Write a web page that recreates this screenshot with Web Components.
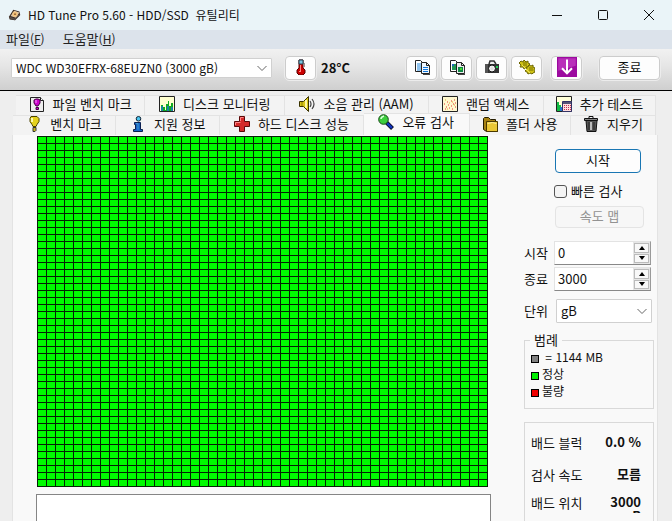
<!DOCTYPE html>
<html lang="ko">
<head>
<meta charset="utf-8">
<title>HD Tune Pro 5.60 - HDD/SSD 유틸리티</title>
<style>
html,body{margin:0;height:100%;overflow:hidden}
body{background:#eee;font:13px/16px "Noto Sans CJK KR","Noto Sans",sans-serif;color:#111}
</style>
</head>
<body>
<tune-app></tune-app>
<script>
const define=(name,html,setup)=>customElements.define(name,class extends HTMLElement{
  constructor(){
    super();
    const t=document.createElement('template');
    t.innerHTML='<style>*{box-sizing:border-box}:host{box-sizing:border-box}button,input,select{font:inherit;color:inherit;margin:0}</style>'+html;
    this.attachShadow({mode:'open'}).append(t.content.cloneNode(true));
  }
  connectedCallback(){ if(setup) setup(this,this.shadowRoot); }
});

const icons={
disk:'<path d="M1 10L6 2l7 2 1 4-6 6-6-1z" fill="#3b2a20"/><path d="M3 9l4-6 6 2-4 6z" fill="#d9c9b4"/><circle cx="8" cy="7" r="3" fill="#f2c27a"/><circle cx="8" cy="7" r="1" fill="#8a5a30"/><path d="M2 10l6 2 5-5v2l-5 5-6-2z" fill="#57504c"/>',
thermo:'<path d="M6 1h4v8l2 2v3l-2 2H6l-2-2v-3l2-2z" fill="#c00" stroke="#500"/><path d="M6 1h4v4H6z" fill="#7cc6e0" stroke="#245"/><path d="M7 6v6H6v1h2V6z" fill="#f88"/><path d="M11 7h1M11 5h1" stroke="#333"/>',
copy:'<path d="M1.500 1.500h5l2 2v9h-7z" fill="#fff" stroke="#222"/><path d="M3 5h4M3 7h4M3 9h4M3 11h4" stroke="#28d"/><path d="M7.500 3.500h5l3 3v8h-8z" fill="#eef7ff" stroke="#222"/><path d="M12.500 3.500v3h3" fill="none" stroke="#222"/><path d="M9 8.500h5M9 10.500h5M9 12.500h5" stroke="#17d"/><path d="M9 15.500h7V8" fill="none" stroke="#444"/>',
copyimg:'<path d="M1.500 1.500h5l2 2v9h-7z" fill="#fff" stroke="#222"/><path d="M3 5h4v6H3z" fill="#295"/><path d="M3 5h2v2H3z" fill="#26b"/><path d="M7.500 3.500h5l3 3v8h-8z" fill="#eee" stroke="#222"/><path d="M12.500 3.500v3h3" fill="none" stroke="#222"/><path d="M9 8h5v5H9z" fill="#184"/><path d="M11 9h2v2h-2z" fill="#4d3"/><path d="M9 15.500h7V8" fill="none" stroke="#444"/>',
camera:'<path d="M5 5l1-3h4l2 3" fill="#eee" stroke="#333" stroke-width="1.500"/><path d="M1 5h14v9H1z" fill="#333"/><path d="M1 5h3v9H1z" fill="#555"/><circle cx="8" cy="9.500" r="3.500" fill="#eee" stroke="#111"/><circle cx="8" cy="9.500" r="1.500" fill="#ddd"/><path d="M12 7h2v2h-2z" fill="#2c5"/>',
gears:'<g stroke="#6b6400" stroke-linejoin="round"><path d="M2 2l2 1 1-2 2 2 2-1v2l2 1-2 2v2l-2 0-2 1-1-2-3 0 1-2-2-2z" fill="#cfc214"/><path d="M7 8l2 0 1-2 2 1 2-1v2l2 1-1 2 1 2-2 1-1 1-2-1-2 1-1-2-2-1 2-2z" fill="#cfc214"/></g><path d="M5 3v4M7 3v4M11 8v4M13 8v4" stroke="#776f00"/><path d="M3 6l8 8" stroke="#eee35b"/>',
down:'<path d="M0 0h16v16H0z" fill="#9c0a9f"/><path d="M1 1h14v6L1 11z" fill="#b92fba"/><path d="M8 2v11M4 9l4 4 4-4" fill="none" stroke="#fff" stroke-width="1.600"/>',
filebench:'<path d="M1.500 1.500h10l3 3v11h-13z" fill="#eee" stroke="#222"/><path d="M11.500 1.500v3h3" fill="#fff" stroke="#222"/><path d="M5 4l2-1h2l2 1v3l-2 3H7L5 7z" fill="#c0c" stroke="#404"/><path d="M7 11.500h2.500v2H7z" fill="#c0c" stroke="#404"/><path d="M7 4v3" stroke="#f9f"/>',
monitor:'<path d="M.5.5h15v15H.5z" fill="#ffffcf" stroke="#222"/><path d="M2 15V9h2v2h2v3h1V8h2V5h1v5h2V7h2v8z" fill="#1a2"/><path d="M3 10v5M9 10v5M13 11v4" stroke="#27c" stroke-width="1.500"/>',
sound:'<path d="M.5 5.500h4l5-5v15l-5-5h-4z" fill="#d8c619" stroke="#3a3300"/><path d="M7 4v8" stroke="#fff8a0" stroke-width="2"/><path d="M3 6v4" stroke="#8b7c00"/><path d="M11 5q2 3 0 6M13 3q4 5 0 10" fill="none" stroke="#444" stroke-width="1.200"/>',
random:'<path d="M.5.5h15v15H.5z" fill="#fff8cf" stroke="#222"/><path d="M2 8h1M4 11h1M3 13h1M6 9h1M7 12h1M5 6h1M9 10h1M11 8h1M13 11h1M9 5h1M12 4h1M13 7h1M10 13h1" stroke="#d33"/><path d="M3 4h1M7 7h1M10 6h1M12 9h1M5 13h1" stroke="#da3"/>',
extra:'<path d="M.5.5h15v15H.5z" fill="#ffffd8" stroke="#222"/><path d="M1 6h2v3h2v6H1z" fill="#1b4"/><path d="M4 11h2v4H4z" fill="#27c"/><path d="M6.500 5.500h9v10h-9z" fill="#fdd" stroke="#336"/><path d="M7 6h8v2H7z" fill="#557"/><path d="M8 9.500h7M8 11.500h7M8 13.500h7" stroke="#b35" stroke-dasharray="1 1"/>',
bulb:'<path d="M5 .5h6l2 2v3l-2 3-1 2H7l-1-2-2-3v-3z" fill="#e5d21d" stroke="#4a4300"/><path d="M6 2v4" stroke="#fff9b0" stroke-width="2"/><path d="M7 11.500h3v3l-1 1H7z" fill="#cbb81c" stroke="#333"/>',
info:'<circle cx="8.500" cy="2.800" r="2.300" fill="#4ac4ef" stroke="#123"/><path d="M4.500 6.500h6v7h2v2h-9v-2h2v-5h-1z" fill="#1563c4" stroke="#0b1f50"/><path d="M6 7.500h2v6" fill="none" stroke="#49c"/>',
cross:'<path d="M5.500.5h5v5h5v5h-5v5h-5v-5h-5v-5h5z" fill="#d42a2a" stroke="#5a0808"/><path d="M6.500 5V1.500h3M1.500 9V6.500h5" fill="none" stroke="#f88"/>',
lens:'<path d="M8.500 8.500l6 6" stroke="#001" stroke-width="4"/><path d="M9 9l5 5" stroke="#13b" stroke-width="2.500"/><circle cx="5.500" cy="5.500" r="4.800" fill="#3ccd3c" stroke="#174a17"/><path d="M3 5q0-2 3-3" fill="none" stroke="#d8ffd8" stroke-width="1.500"/>',
folder:'<path d="M1.500 2.500l1-1h4l2 2h5v3l2 0v9h-11l-3-2z" fill="#a78112" stroke="#241c00"/><path d="M4.500 5.500h11v10h-11z" fill="#eac735" stroke="#4a3900"/><path d="M5.500 7.500q5-2 9 0" fill="none" stroke="#fff0a0"/>',
trash:'<path d="M3 4.500h11l-1 11H4z" fill="#555" stroke="#111"/><path d="M1.500 2.500h13v2h-13z" fill="#888" stroke="#111"/><path d="M6 2V.5h4V2" fill="none" stroke="#111"/><path d="M6 6v8M11 6v8" stroke="#222"/><path d="M8 6v8" stroke="#bbb" stroke-width="2"/>'
};
define('tune-icon','<style>:host{display:block;width:16px;height:16px;flex:none}svg{display:block;width:100%;height:100%}</style><svg viewBox="0 0 16 16" aria-hidden="true"></svg>',
  (el,r)=>{r.querySelector('svg').innerHTML=icons[el.getAttribute('name')]});

define('title-bar',`<style>
:host{display:flex;align-items:center;height:30px;padding-left:8px;background:#eaf4f8;font-size:12px}
tune-icon{width:14px;height:14px;margin-right:6px}
span{flex:1;white-space:pre}
button{width:46px;height:30px;border:0;background:none;padding:0;display:grid;place-items:center}
svg{width:12px;height:12px;fill:none;stroke:#111}
</style><tune-icon name="disk"></tune-icon><span><slot></slot></span>
<button aria-label="최소화"><svg><path d="M1 6.500h10"/></svg></button>
<button aria-label="최대화"><svg><rect x="1.500" y="1.500" width="9" height="9" rx="1"/></svg></button>
<button aria-label="닫기"><svg><path d="M1 1l10 10M11 1L1 11"/></svg></button>`);

define('menu-bar',`<style>
:host{display:flex;gap:18px;height:19px;padding:0 6px;background:#dce3eb;align-items:flex-start}
button{border:0;background:none;padding:0;color:#222;line-height:18px}small{font-size:12px}
</style><button>파일<small>(<u>F</u>)</small></button><button>도움말<small>(<u>H</u>)</small></button>`);

define('tool-button',`<style>
:host{display:block;width:31px;height:24px;flex:none;font-size:13px}
:host([wide]){width:61px}
button{width:100%;height:100%;border:1px solid #ccc;border-radius:4px;background:#fdfdfd;padding:0 0 1px;line-height:18px;display:grid;place-items:center;outline:1px solid #ececec}
</style><button><slot></slot></button>`,
(el,r)=>{const l=el.getAttribute('label'); if(l) r.querySelector('button').setAttribute('aria-label',l)});

define('drop-down',`<style>
:host{display:block;position:relative}
select{appearance:none;width:100%;height:100%;border:1px solid #d0d0d0;border-radius:1px;background:#fff;padding:0 20px 0 4px;line-height:18px}
svg{position:absolute;right:5px;top:calc(50% - 3px);width:10px;height:7px;fill:none;stroke:#666;pointer-events:none}
</style><select></select><svg><path d="M.5 1l4.500 4.500L9.500 1"/></svg>`,
(el,r)=>{const s=r.querySelector('select');s.add(new Option(el.getAttribute('value')));s.setAttribute('aria-label',el.getAttribute('label'))});

define('tool-bar',`<style>
:host{display:flex;align-items:center;height:42px;padding:0 12px 4px 11px;border-bottom:1px solid #000;background:linear-gradient(#f1f1f1,#e6e6e6 40%,#cfcfcf)}
drop-down{flex:0 1 261px;height:20px;margin-right:13px;font-size:12px}
.temp{flex:1;padding-left:5px;font-weight:700}
.group{display:flex;gap:4px;margin-right:9px}
.end{display:flex;gap:17px}
tune-icon[name=down]{width:20px;height:20px}
</style><drop-down label="드라이브" value="WDC WD30EFRX-68EUZN0 (3000 gB)"></drop-down>
<tool-button label="온도"><tune-icon name="thermo"></tune-icon></tool-button><span class="temp">28°C</span>
<div class="group"><tool-button label="텍스트 복사"><tune-icon name="copy"></tune-icon></tool-button>
<tool-button label="그림 복사"><tune-icon name="copyimg"></tune-icon></tool-button>
<tool-button label="스크린샷"><tune-icon name="camera"></tune-icon></tool-button>
<tool-button label="설정"><tune-icon name="gears"></tune-icon></tool-button></div>
<div class="end"><tool-button label="내려받기"><tune-icon name="down"></tune-icon></tool-button><tool-button wide>종료</tool-button></div>`);

define('tab-item',`<style>
:host{display:block;min-width:0;border:solid #e3e3e3;border-width:1px 1px 0 0;background:#f3f3f3}
:host([active]){background:#f9f9f9;margin:-2px 0 -1px;padding-bottom:3px;position:relative}
button{width:100%;height:100%;padding:0 0 3px;border:0;background:none;display:flex;align-items:center;justify-content:center;gap:8px;white-space:nowrap;line-height:16px}
</style><button role="tab"><tune-icon></tune-icon><span><slot></slot></span></button>`,
(el,r)=>{const i=document.createElement('tune-icon');i.setAttribute('name',el.getAttribute('icon'));r.querySelector('tune-icon').replaceWith(i);r.querySelector('button').setAttribute('aria-selected',el.hasAttribute('active'))});

define('tab-strip',`<style>
:host{display:block;padding:4px 16px 0 13px}
div{display:grid;height:20px}
.a{grid-template-columns:129fr 140fr 143fr 115fr 112fr;margin-left:3px}
.b{grid-template-columns:103fr 104fr 143fr 106fr 101fr 85fr}
</style><div class="a" role="tablist">
<tab-item icon="filebench">파일 벤치 마크</tab-item><tab-item icon="monitor">디스크 모니터링</tab-item><tab-item icon="sound">소음 관리 (AAM)</tab-item><tab-item icon="random">랜덤 액세스</tab-item><tab-item icon="extra">추가 테스트</tab-item></div>
<div class="b" role="tablist">
<tab-item icon="bulb">벤치 마크</tab-item><tab-item icon="info">지원 정보</tab-item><tab-item icon="cross">하드 디스크 성능</tab-item><tab-item icon="lens" active>오류 검사</tab-item><tab-item icon="folder">폴더 사용</tab-item><tab-item icon="trash">지우기</tab-item></div>`);

define('block-map',`<style>
:host{display:block;height:351px;border:solid #042204;border-width:0 1px 1px 0;background:linear-gradient(90deg,#042204 1px,transparent 1px) 0 0/9px 7px,linear-gradient(#042204 1px,#00fb00 1px) 0 0/9px 7px}
</style>`);

define('spin-field',`<style>
:host{display:grid;grid-template-columns:30px minmax(0,1fr);align-items:center;height:24px}
.box{display:flex;min-width:0;height:24px;border:1px solid #e3e3e3;border-right-color:#999;border-bottom-color:#888;background:#fff}
input{flex:1;min-width:0;width:0;border:0;padding:0 3px;background:none;outline:0}
.spin{display:grid;grid-template-rows:1fr 1fr;width:17px;flex:none;background:#e6e6e6;gap:1px;padding:1px}
.spin button{border:1px solid #bbb;background:#f8f8f8;padding:0;display:grid;place-items:center;min-height:0}
svg{width:6px;height:4px;display:block}
</style><label for="v"></label><div class="box"><input id="v"><div class="spin"><button aria-label="증가"><svg><path d="M0 4l3-4 3 4z"/></svg></button><button aria-label="감소"><svg><path d="M0 0l3 4 3-4z"/></svg></button></div></div>`,
(el,r)=>{r.querySelector('label').textContent=el.getAttribute('label');r.querySelector('input').value=el.getAttribute('value')});

define('legend-item',`<style>
:host{display:flex;align-items:center;gap:3px;height:17px;white-space:pre;font-size:12px}
i{width:8px;height:8px;border:1px solid #000;background:var(--swatch);margin-top:5px}
</style><i></i><span><slot></slot></span>`);

define('group-box',`<style>
:host{display:block}
fieldset{margin:0;padding:0 6px;border:1px solid #d9d9d9;min-width:0;height:100%}
legend{padding:0 4px;margin-left:-1px}
</style><fieldset><slot></slot></fieldset>`,
(el,r)=>{const l=el.getAttribute('label');if(l){const g=document.createElement('legend');g.textContent=l;r.querySelector('fieldset').prepend(g)}});

define('stat-row',`<style>
:host{display:flex;justify-content:space-between;align-items:flex-start}
b{width:44px;text-align:right;line-height:14px;white-space:nowrap}
</style><span><slot></slot></span><b><slot name="value"></slot></b>`);

define('scan-controls',`<style>
:host{display:flex;flex-direction:column}
.start{width:86px;height:24px;margin:14px 0 0 31px;border:1px solid #1976b3;border-radius:4px;background:#fdfdfd;padding:0 0 2px;line-height:18px}
.check{display:flex;align-items:center;gap:4px;margin:9px 0 0 30px;height:18px}
input{appearance:none;width:13px;height:13px;border:1px solid #555;border-radius:3px;background:#f4f4f4}
.map{width:89px;height:22px;margin:6px 0 13px 31px;border:1px solid #e4e4e4;border-radius:4px;background:#f7f7f7;color:#929292;padding:0 0 2px;line-height:18px}
spin-field{margin-right:3px}
spin-field+spin-field{margin-top:2px}
.unit{display:grid;grid-template-columns:32px minmax(0,1fr);align-items:center;margin:8px 2px 0 0}
.unit drop-down{height:24px}
.legend{margin-top:9px;height:77px}
.stats{margin-top:13px;height:120px}
stat-row{margin-right:6px}
.s1{margin-top:12px}.s2{margin-top:16px}.s3{margin-top:12px}
.clip{display:block;height:18px;overflow:hidden;white-space:normal;line-height:14px}
</style>
<button class="start">시작</button>
<label class="check"><input type="checkbox">빠른 검사</label>
<button class="map" disabled>속도 맵</button>
<spin-field label="시작" value="0"></spin-field>
<spin-field label="종료" value="3000"></spin-field>
<div class="unit"><span>단위</span><drop-down label="단위" value="gB"></drop-down></div>
<group-box class="legend" label="범례"><legend-item style="--swatch:#808080"> = 1144 MB</legend-item><legend-item style="--swatch:#00f000">정상</legend-item><legend-item style="--swatch:#f00000">불량</legend-item></group-box>
<group-box class="stats"><stat-row class="s1">배드 블럭<span slot="value">0.0 %</span></stat-row><stat-row class="s2">검사 속도<span slot="value">모름</span></stat-row><stat-row class="s3">배드 위치<span slot="value" class="clip">3000 gB</span></stat-row></group-box>`);

define('tune-app',`<style>
:host{display:flex;flex-direction:column;height:100%;overflow:hidden}
main{flex:1;min-height:0;display:grid;grid-template-columns:minmax(0,1fr) 130px;column-gap:33px;margin:0 14px 0 12px;padding:0 3px 0 23px;background:#f9f9f9;border:solid #e3e3e3;border-width:0 1px}
.left{min-width:0;padding-top:1px}
block-map{margin:0 3px 7px 1px}
textarea{display:block;width:100%;height:100px;resize:none;border:1px solid #858585;background:#fff;border-radius:0}
</style><title-bar>HD Tune Pro 5.60 - HDD/SSD  유틸리티</title-bar><menu-bar></menu-bar><tool-bar></tool-bar><tab-strip></tab-strip>
<main><div class="left"><block-map role="img" aria-label="블록 상태"></block-map><textarea readonly aria-label="로그"></textarea></div><scan-controls></scan-controls></main>`);
</script>
</body>
</html>
